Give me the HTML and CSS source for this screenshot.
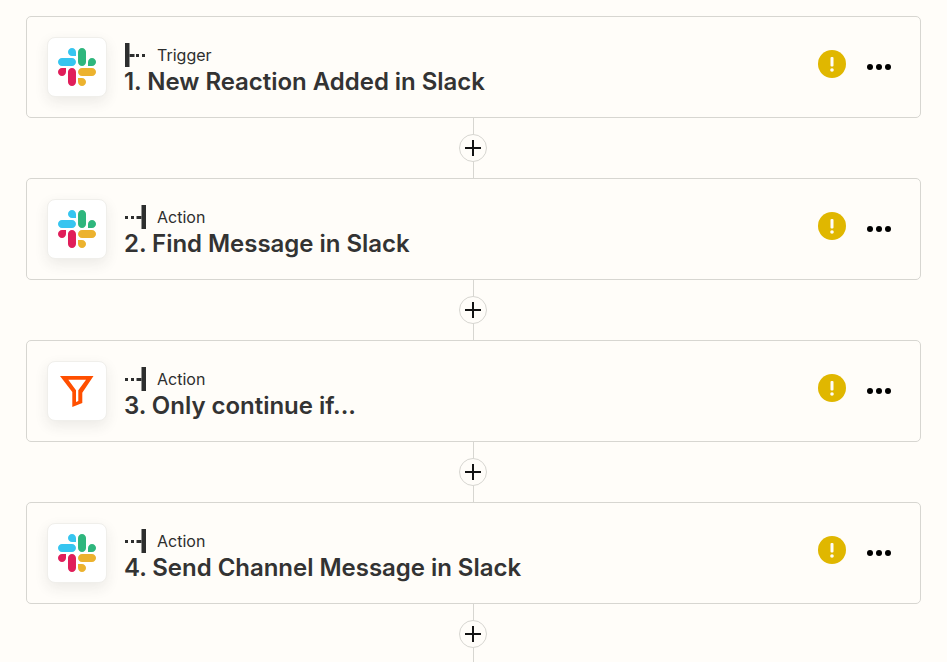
FILE: index.html
```html
<!DOCTYPE html>
<html lang="en">
<head>
    <meta charset="UTF-8">
    <meta name="viewport" content="width=device-width, initial-scale=1.0">
    <title>Zap editor</title>
    <link rel="stylesheet" href="styles.css">
</head>
<body>
<svg class="defs" width="0" height="0">
    <symbol id="slack" viewBox="0 0 122.8 122.8">
        <path d="M25.8 77.6c0 7.1-5.8 12.9-12.9 12.9S0 84.7 0 77.6s5.8-12.9 12.9-12.9h12.9v12.9z" fill="#E01E5A"/>
        <path d="M32.3 77.6c0-7.1 5.8-12.9 12.9-12.9s12.9 5.8 12.9 12.9v32.3c0 7.1-5.8 12.9-12.9 12.9s-12.9-5.8-12.9-12.9V77.6z" fill="#E01E5A"/>
        <path d="M45.2 25.8c-7.1 0-12.9-5.8-12.9-12.9S38.1 0 45.2 0s12.9 5.8 12.9 12.9v12.9H45.2z" fill="#36C5F0"/>
        <path d="M45.2 32.3c7.1 0 12.9 5.8 12.9 12.9s-5.8 12.9-12.9 12.9H12.9C5.8 58.1 0 52.3 0 45.2s5.8-12.9 12.9-12.9h32.3z" fill="#36C5F0"/>
        <path d="M97 45.2c0-7.1 5.8-12.9 12.9-12.9s12.9 5.8 12.9 12.9-5.8 12.9-12.9 12.9H97V45.2z" fill="#2EB67D"/>
        <path d="M90.5 45.2c0 7.1-5.8 12.9-12.9 12.9s-12.9-5.8-12.9-12.9V12.9C64.7 5.8 70.5 0 77.6 0s12.9 5.8 12.9 12.9v32.3z" fill="#2EB67D"/>
        <path d="M77.6 97c7.1 0 12.9 5.8 12.9 12.9s-5.8 12.9-12.9 12.9-12.9-5.8-12.9-12.9V97h12.9z" fill="#ECB22E"/>
        <path d="M77.6 90.5c-7.1 0-12.9-5.8-12.9-12.9s5.8-12.9 12.9-12.9h32.3c7.1 0 12.9 5.8 12.9 12.9s-5.8 12.9-12.9 12.9H77.6z" fill="#ECB22E"/>
    </symbol>
    <symbol id="trigger-mark" viewBox="0 0 22 24">
        <rect x="0" y="0" width="4.5" height="24" fill="#2d2e2e"/>
        <rect x="4.5" y="11" width="5" height="3" fill="#2d2e2e"/>
        <rect x="11" y="11" width="3" height="3" fill="#2d2e2e"/>
        <rect x="17" y="11" width="3" height="3" fill="#2d2e2e"/>
    </symbol>
    <symbol id="action-mark" viewBox="0 0 22 24">
        <rect x="16.5" y="0" width="4.5" height="24" fill="#2d2e2e"/>
        <rect x="11.5" y="11" width="5" height="3" fill="#2d2e2e"/>
        <rect x="6" y="11" width="3" height="3" fill="#2d2e2e"/>
        <rect x="0" y="11" width="3" height="3" fill="#2d2e2e"/>
    </symbol>
    <symbol id="warn" viewBox="0 0 28 28">
        <circle cx="14" cy="14" r="14" fill="#e0b700"/>
        <rect x="12.5" y="7" width="3" height="9.5" rx="1" fill="#fffdf9"/>
        <circle cx="14" cy="20" r="1.8" fill="#fffdf9"/>
    </symbol>
    <symbol id="dots" viewBox="0 0 24 6">
        <circle cx="3" cy="3" r="3"/>
        <circle cx="12" cy="3" r="3"/>
        <circle cx="21" cy="3" r="3"/>
    </symbol>
    <symbol id="plus" viewBox="0 0 16 16">
        <path d="M8 0v16M0 8h16" stroke="#131313" stroke-width="2" fill="none"/>
    </symbol>
</svg>

<main class="flow">
    <section class="step">
        <div class="app-icon"><svg class="slack-logo"><use href="#slack"/></svg></div>
        <div class="step-text">
            <div class="step-type"><svg class="type-mark"><use href="#trigger-mark"/></svg><span>Trigger</span></div>
            <h2>1. New Reaction Added in Slack</h2>
        </div>
        <svg class="warn-icon"><use href="#warn"/></svg>
        <svg class="more-icon"><use href="#dots"/></svg>
    </section>
    <div class="connector"><button class="add-btn"><svg><use href="#plus"/></svg></button></div>

    <section class="step">
        <div class="app-icon"><svg class="slack-logo"><use href="#slack"/></svg></div>
        <div class="step-text">
            <div class="step-type"><svg class="type-mark"><use href="#action-mark"/></svg><span>Action</span></div>
            <h2>2. Find Message in Slack</h2>
        </div>
        <svg class="warn-icon"><use href="#warn"/></svg>
        <svg class="more-icon"><use href="#dots"/></svg>
    </section>
    <div class="connector"><button class="add-btn"><svg><use href="#plus"/></svg></button></div>

    <section class="step">
        <div class="app-icon">
            <svg class="filter-logo" viewBox="0 0 34 31">
                <path fill-rule="evenodd" fill="#ff4f00" d="M0 0H33.5L22.3 16.7V27L12.3 31V16ZM8.3 3.7L16 14.3V26L18.3 25V14.3L26 3.7Z"/>
            </svg>
        </div>
        <div class="step-text">
            <div class="step-type"><svg class="type-mark"><use href="#action-mark"/></svg><span>Action</span></div>
            <h2>3. Only continue if...</h2>
        </div>
        <svg class="warn-icon"><use href="#warn"/></svg>
        <svg class="more-icon"><use href="#dots"/></svg>
    </section>
    <div class="connector"><button class="add-btn"><svg><use href="#plus"/></svg></button></div>

    <section class="step">
        <div class="app-icon"><svg class="slack-logo"><use href="#slack"/></svg></div>
        <div class="step-text">
            <div class="step-type"><svg class="type-mark"><use href="#action-mark"/></svg><span>Action</span></div>
            <h2>4. Send Channel Message in Slack</h2>
        </div>
        <svg class="warn-icon"><use href="#warn"/></svg>
        <svg class="more-icon"><use href="#dots"/></svg>
    </section>
    <div class="connector"><button class="add-btn"><svg><use href="#plus"/></svg></button></div>
</main>
</body>
</html>
```

FILE: styles.css
```css
html, body {
    height: 100%;
}
body {
    font-family: Inter, "Liberation Sans", sans-serif;
    background: #fffdf9;
    color: #2d2e2e;
    margin: 0;
    overflow: hidden;
}
.defs {
    display: block;
    height: 0;
}
.flow {
    padding: 16px 26px 0;
}
.step {
    display: flex;
    align-items: center;
    box-sizing: border-box;
    height: 102px;
    padding: 0 29px 0 20px;
    border: 1px solid #d7d6d1;
    border-radius: 5px;
}
.app-icon {
    display: flex;
    justify-content: center;
    align-items: center;
    flex: none;
    width: 60px;
    height: 60px;
    background: #fff;
    border: 1px solid #f0efeb;
    border-radius: 8px;
    box-sizing: border-box;
    box-shadow: 0 5px 14px rgba(45, 46, 46, 0.09);
}
.slack-logo {
    width: 38px;
    height: 38px;
}
.filter-logo {
    width: 34px;
    height: 31px;
}
.step-text {
    flex: 1;
    margin: 5px 0 0 18px;
}
.step-type {
    display: flex;
    align-items: center;
    height: 24px;
    font-size: 16px;
}
.type-mark {
    width: 22px;
    height: 24px;
    margin-right: 10px;
}
.step-text h2 {
    margin: 0 0 0 -1px;
    font-size: 24px;
    line-height: 30px;
    font-weight: 600;
    letter-spacing: -0.03px;
    color: #333;
}
.warn-icon {
    flex: none;
    width: 28px;
    height: 28px;
    margin-top: -6px;
}
.more-icon {
    flex: none;
    width: 24px;
    height: 6px;
    margin-left: 21px;
}
.connector {
    display: flex;
    justify-content: center;
    align-items: center;
    height: 60px;
    padding-right: 1px;
    background: linear-gradient(#d7d6d1, #d7d6d1) center / 1px 100% no-repeat;
}
.add-btn {
    display: flex;
    justify-content: center;
    align-items: center;
    width: 28px;
    height: 28px;
    padding: 0;
    background: #fffdf9;
    border: 1px solid #d7d6d1;
    border-radius: 50%;
}
.add-btn svg {
    width: 16px;
    height: 16px;
}
```
